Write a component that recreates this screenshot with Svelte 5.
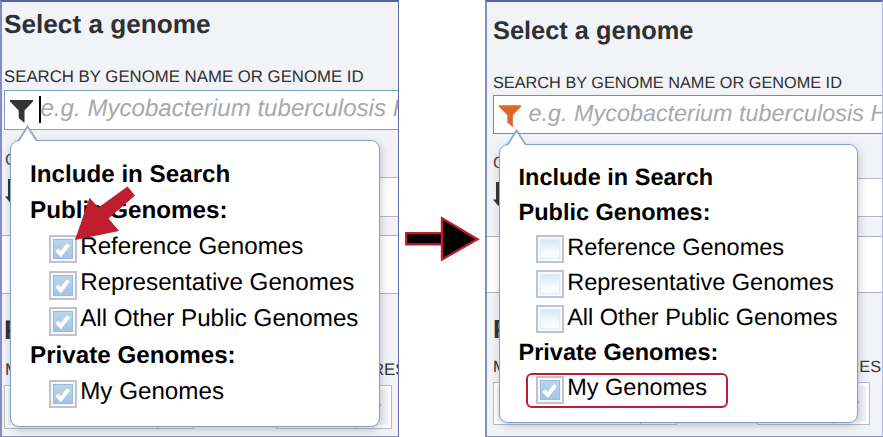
<script>
  const panels = [
    { id: 'before', caret: true, checked: [true, true, true, true] },
    { id: 'after', caret: false, checked: [false, false, false, true] }
  ];
  const publicSets = ['Reference Genomes', 'Representative Genomes', 'All Other Public Genomes'];
</script>

{#snippet option(label, on)}
  <div class="row option">
    <span class="box" class:on>
      <span class="fill">
        {#if on}
          <svg viewBox="0 0 20 20"><path d="M3.2 10.8 7.6 15.4 16 4.6" /></svg>
        {/if}
      </span>
    </span>
    <span>{label}</span>
  </div>
{/snippet}

{#snippet panel(p)}
  <section class="panel {p.id}">
    <h1>Select a genome</h1>
    <div class="label">SEARCH BY GENOME NAME OR GENOME ID</div>
    <div class="search">
      <svg class="funnel" viewBox="0 0 23 23"><path d="M0 0H23V1.6L14.5 10.5V23L8.7 18V10.5L0 1.6Z" /></svg>
      <span class="caret" class:show={p.caret}></span>
      <span class="placeholder">e.g. Mycobacterium tuberculosis H</span>
    </div>
    <div class="sort">
      <div class="side">
        <div class="small">O</div>
        <svg class="down" viewBox="0 0 12 24"><path d="M3 0H7V17H11L5.5 24 0 17.5H3Z" /></svg>
      </div>
      <div class="field"></div>
    </div>
    <div class="list"></div>
    <div class="lower">
      <h2>P</h2>
      <div class="names"><span>M</span><span class="res">RES</span></div>
      <div class="selects">
        <div class="select first"><i></i></div>
        <div class="select second"><i></i><b></b></div>
      </div>
    </div>

    <div class="popup">
      <svg class="tip" viewBox="0 0 22 17"><path d="M0 17.5 10.5 1.5 21 17.5Z" fill="#fff" /><path d="M1 15.9 C2.4 15 3 13.6 3.8 12.3 L10.5 1.5 20 15.9" fill="none" stroke="#8eacd0" stroke-width="1.9" /></svg>
      <div class="row head">Include in Search</div>
      <div class="row head">Public Genomes:</div>
      {#each publicSets as name, i}
        {@render option(name, p.checked[i])}
      {/each}
      <div class="row head">Private Genomes:</div>
      {@render option('My Genomes', p.checked[3])}
      {#if p.id === 'after'}
        <div class="ring"></div>
      {/if}
    </div>
    {#if p.id === 'before'}
      <svg class="pointer" viewBox="0 0 61 55"><path d="M1 55 15.5 12.7 24.5 22.5 53.5 1.5 61 10.5 34.5 33.5 45 46Z" /></svg>
    {/if}
  </section>
{/snippet}

<main>
  {@render panel(panels[0])}
  <div class="between">
    <svg viewBox="0 0 77 46"><path d="M1.2 17.2H37V28.4H1.2Z" /><path d="M37 2.2 72.5 23.2 37 43.5Z" /></svg>
  </div>
  {@render panel(panels[1])}
</main>

<style>
  :global(body) { background: #fff; overflow: hidden; }
  main {
    display: flex;
    width: 883px;
    height: 437px;
    overflow: hidden;
    font-family: "Liberation Sans", Arial, sans-serif;
    text-rendering: geometricPrecision;
    white-space: nowrap;
  }
  .panel {
    position: relative;
    box-sizing: border-box;
    display: flex;
    flex-direction: column;
    height: 437px;
    border: solid #6268ad;
    border-width: 2px 1px 1px 2px;
    border-left-color: #858bc5;
    border-top-color: #5c62a8;
    border-bottom-color: #8b8dbb;
    background: #f2f3f7;
    overflow: hidden;
    flex: none;
  }
  .before {
    width: 399px; --fs: 24.2px; --row: 36.2px; --icon: #333435;
    --padl: 3px; --sort: 105.5px; --list: 59px;
  }
  .after {
    width: 398px; --fs: 23.5px; --row: 35.1px; --icon: #e0672b;
    --padl: 6px; --sort: 102px; --list: 57px; border-right-color: #b6b9d6;
  }
  h1 { margin: 0; padding: 1px 0 0 2px; font-size: 26.2px; line-height: 42px; color: #2f3031; }
  .after h1 { padding: 8px 0 0 6px; font-size: 25.4px; }
  .label { margin-top: 18px; padding-left: 2px; font-size: 16.8px; line-height: 28px; height: 27px; color: #2f3031; }
  .after .label { margin-top: 17px; padding-left: 6px; font-size: 16.3px; line-height: 28px; height: 26px; }
  .search {
    box-sizing: border-box; flex: none; height: 39.5px; margin-left: 2px;
    border: 1px solid #7ba0c8; border-right: 0; background: #fff;
    display: flex; align-items: center; overflow: hidden;
  }
  .after .search { margin-left: 6px; height: 39px; border-color: #cc6b68; }
  .funnel { flex: none; width: 23px; height: 23px; margin: 4px 0 0 4.5px; fill: var(--icon); }
  .after .funnel { width: 22px; height: 22.5px; margin-left: 5px; }
  .caret { flex: none; width: 2px; height: 27px; margin-left: 6.5px; }
  .caret.show { background: #000; }
  .placeholder { padding-bottom: 2px; font-size: 24.1px; font-style: italic; color: #a7a9ab; margin-left: -.5px; }
  .after .placeholder { font-size: 23.4px; margin-left: -1px; }
  .sort { flex: none; height: var(--sort); display: flex; justify-content: space-between; padding-left: var(--padl); box-sizing: border-box; }
  .side { padding-top: 21px; }
  .after .side { padding-top: 20px; }
  .small { font-size: 16.5px; line-height: 19px; color: #444; }
  .down { display: block; width: 12px; height: 24px; margin-top: 9px; fill: #303133; }
  .field { width: 120px; height: 38px; margin-top: 47px; background: #fff; border: solid #b3b5c4; border-width: 1px 0; }
  .after .field { margin-top: 44px; height: 37px; }
  .list { flex: none; box-sizing: border-box; height: var(--list); background: #fff; border: solid #b0b1b9; border-width: 1px 0; }
  .lower { padding-left: var(--padl); }
  h2 { margin: 20px 0 0 -1px; font-size: 27px; line-height: 32px; color: #303133; }
  .after h2 { margin-left: 0; font-size: 26px; }
  .names { display: flex; margin-top: 14px; font-size: 16.8px; line-height: 19px; color: #333; }
  .names .res { margin-left: 353px; }
  .after .names { font-size: 16.3px; margin-top: 13px; }
  .after .names .res { margin-left: 341px; }
  .selects { display: flex; margin: 6px 0 0 -1px; gap: 82px; }
  .after .selects { margin: 5px 0 0 0; gap: 80px; }
  .select {
    box-sizing: border-box; height: 43px; width: 190px; background: #f2f3f5; flex: none;
    border: 1.5px solid #b9bbc8; box-shadow: inset 0 0 0 3px #fff; position: relative; display: flex; justify-content: flex-end;
  }
  .select.second { width: 116px; }
  .select i { width: 35px; border-left: 1px solid #b9bbc8; }
  .select b { position: absolute; right: 10px; top: 18px; width: 6px; height: 2px; background: #8db2d6; }
  .before .select { height: 44px; }
  .after .select { height: 43px; width: 184px; }
  .after .select.second { width: 113px; }
  .popup {
    position: absolute; left: 8px; top: 138px; width: 370px; height: 287px; box-sizing: border-box;
    border: 1.5px solid #7fa2ca; border-radius: 9px; background: #fff; padding: 15.6px 0 0 19px;
    box-shadow: 1px 3px 9px rgba(60, 70, 90, .28); color: #000;
  }
  .after .popup { left: 12px; top: 142px; width: 359px; height: 279px; padding-left: 18.5px; padding-top: 14.5px; }
  .tip { position: absolute; left: 6px; top: -16.5px; width: 22px; height: 17px; overflow: visible; }
  .row { height: var(--row); line-height: var(--row); font-size: var(--fs); }
  .head { font-weight: bold; }
  .option { display: flex; padding-left: 19px; gap: 3.2px; }
  .after .option { padding-left: 17.5px; gap: 3.2px; }
  .box {
    box-sizing: border-box; width: 28px; height: 28.5px; margin-top: 6px; padding: 2px; flex: none;
    border: 2px solid #bfc3d0; background: #f6f8fb; display: flex;
  }
  .after .box { margin-top: 5.5px; height: 28px; }
  .fill { flex: 1; border: 1px solid #e2edf5; background: linear-gradient(#d8e8f3, #f8fbfd 70%); display: flex; }
  .on .fill { background: linear-gradient(#bbd5eb, #a3c5e1); border-color: #9abbd9; }
  .fill svg { width: 100%; height: 100%; overflow: visible; }
  .fill path { fill: none; stroke: #fff; stroke-width: 4.4; }
  .ring {
    position: absolute; left: 26px; top: 228px; width: 202px; height: 35px; box-sizing: border-box;
    border: 2px solid #be1e2d; border-radius: 6px;
  }
  .pointer { position: absolute; left: 72px; top: 183px; width: 61px; height: 55px; fill: #be1e2d; overflow: visible; }
  .between { width: 86px; flex: none; display: flex; align-items: flex-start; padding: 216px 0 0 5px; box-sizing: border-box; }
  .between svg { width: 79px; height: 46px; flex: none; }
  .between path { fill: #000; stroke: #be1e2d; stroke-width: 2.3; }
</style>
